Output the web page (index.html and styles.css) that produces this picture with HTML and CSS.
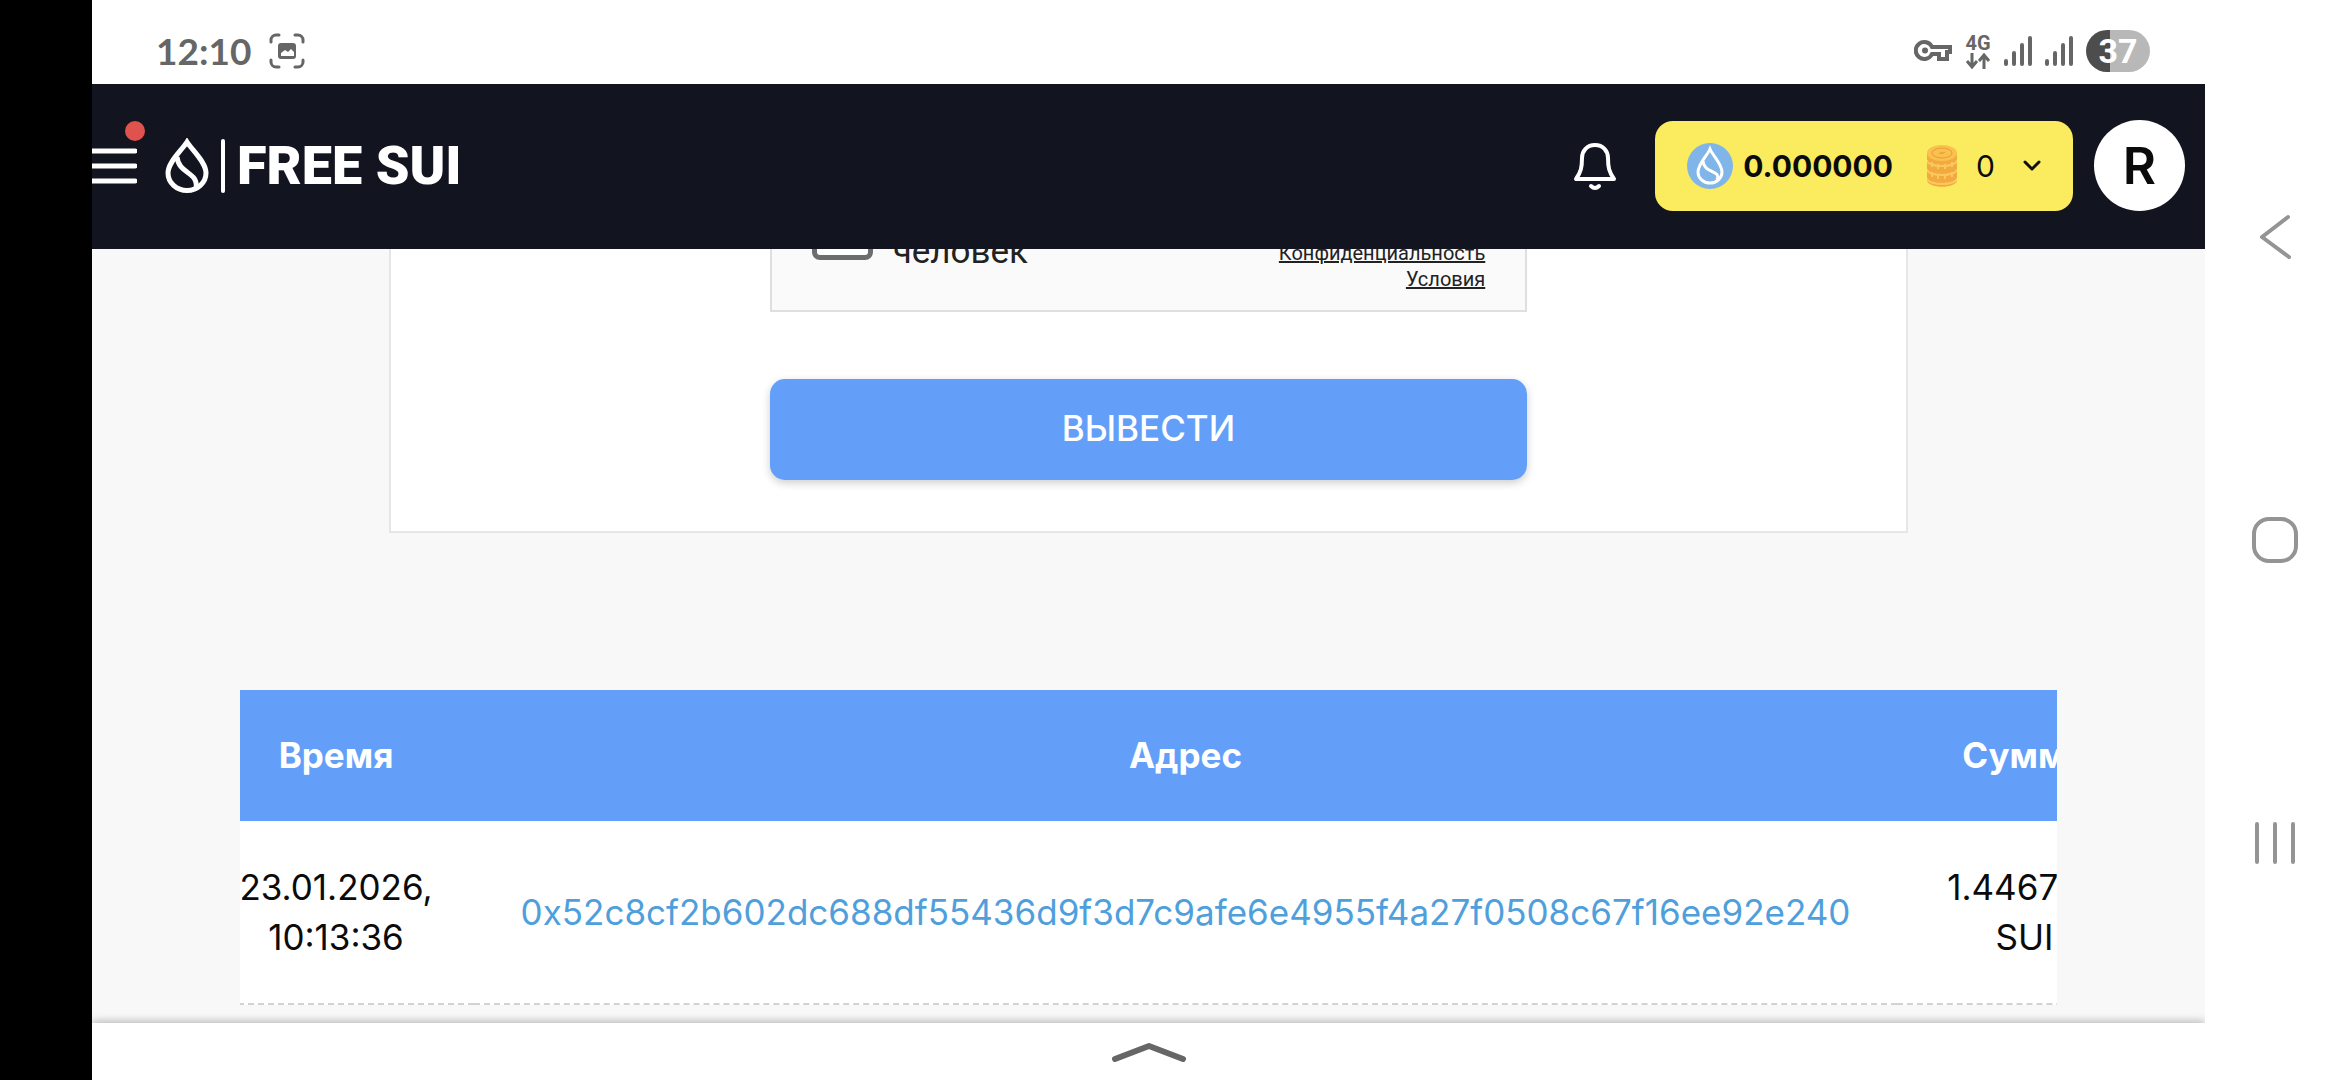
FILE: index.html
```
<!DOCTYPE html>
<html lang="ru">
<head>
  <meta charset="UTF-8">
  <meta name="viewport" content="width=device-width, initial-scale=1.0">
  <title>Free Sui</title>
  <link rel="stylesheet" href="styles.css">
</head>
<body>
  <div class="cutout"></div>

  <div class="screen">
    <div class="status-bar">
      <div class="status-group">
        <span class="clock">12:10</span>
        <svg width="36" height="36" viewBox="0 0 36 36" fill="none" stroke="#666" stroke-width="3" stroke-linecap="round">
          <path d="M2 9V7a5 5 0 0 1 5-5h3M26 2h3a5 5 0 0 1 5 5v2M34 27v2a5 5 0 0 1-5 5h-3M10 34H7a5 5 0 0 1-5-5v-2"/>
          <rect x="9" y="10" width="18" height="16" rx="3" fill="#666" stroke="none"/>
          <path d="M12 23v-3l4-3 3 2 3-3 3 3v4z" fill="#fff" stroke="none"/>
        </svg>
      </div>
      <div class="status-group status-right">
        <svg width="38" height="24" viewBox="0 0 38 24" fill="none" stroke="#666" stroke-width="4">
          <path d="M18 8h18v5h-3v7h-8v-5h-7a8.500 8.500 0 1 1 0-7z"/>
          <circle cx="11" cy="11.500" r="3" fill="#666" stroke="none"/>
        </svg>
        <div class="network">
          <span>4G</span>
          <svg width="26" height="16" viewBox="0 0 26 16" fill="none" stroke="#666" stroke-width="3">
            <path d="M7 0v14M2 8l5 6 5-6M19 16V2M14 8l5-6 5 6"/>
          </svg>
        </div>
        <svg width="28" height="30" viewBox="0 0 28 30" stroke="#666" stroke-width="4" stroke-linecap="round">
          <path d="M2 25v3M10 17v11M18 9v19M26 2v26"/>
        </svg>
        <svg width="28" height="30" viewBox="0 0 28 30" stroke="#666" stroke-width="4" stroke-linecap="round">
          <path d="M2 25v3M10 17v11M18 9v19M26 2v26"/>
        </svg>
        <span class="battery">37</span>
      </div>
    </div>

    <header class="header">
      <button class="menu-btn" aria-label="Меню">
        <svg width="45" height="38" viewBox="0 0 45 38" stroke="#fff" stroke-width="5" stroke-linecap="round">
          <path d="M0 4h43M0 19h43M0 34h43"/>
        </svg>
        <span class="dot"></span>
      </button>
      <a class="logo" href="#">
        <svg width="60" height="56" viewBox="0 0 60 56" fill="none" stroke="#fff" stroke-width="5">
          <path d="M22 4C17 12 3 24 3 35a19 17.500 0 0 0 38 0C41 24 27 12 22 4z"/>
          <path d="M12 19c2 18 22 14 19 32"/>
          <path d="M58 3v50" stroke-width="4" stroke-linecap="round"/>
        </svg>
        <span>FREE SUI</span>
      </a>
      <div class="header-right">
        <button class="bell" aria-label="Уведомления">
          <svg width="44" height="50" viewBox="0 0 44 50" fill="none" stroke="#fff" stroke-width="4" stroke-linejoin="round" stroke-linecap="round">
            <path d="M22 4c-8 0-13 6-13 13 0 9-1 14-6 21h38c-5-7-6-12-6-21 0-7-5-13-13-13z"/>
            <path d="M18 45q4 4 8 0"/>
          </svg>
        </button>
        <button class="balance">
          <svg width="46" height="46" viewBox="0 0 46 46">
            <circle cx="23" cy="23" r="23" fill="#7fb5e9"/>
            <path d="M23 6c-3 7-12 15-12 23a12 11 0 0 0 24 0C35 21 26 13 23 6zM16 18c1 13 19 9 14 19" fill="none" stroke="#fff" stroke-width="3"/>
          </svg>
          <b>0.000000</b>
          <svg class="coins" width="30" height="42" viewBox="0 0 30 42">
            <path d="M0 8v27c0 9 30 9 30 0V8z" fill="#f4a93f"/>
            <path d="M0 15c0 8 30 8 30 0M0 24c0 8 30 8 30 0M0 33c0 8 30 8 30 0" fill="none" stroke="#fbc860" stroke-width="2"/>
            <path d="M5 17v5M11 19v5M18 19v5M25 17v5M5 27v5M11 29v5M18 29v5M25 27v5" stroke="#fbc860" stroke-width="2"/>
            <ellipse cx="15" cy="8" rx="15" ry="8" fill="#fbc14f"/>
            <ellipse cx="15" cy="8" rx="10" ry="5" fill="none" stroke="#e99a35"/>
            <path d="M12 9l3-2v2l3-2" fill="none" stroke="#e99a35"/>
          </svg>
          <span class="coin-count">0</span>
          <svg width="18" height="12" viewBox="0 0 18 12" fill="none" stroke="#111" stroke-width="3" stroke-linecap="round" stroke-linejoin="round">
            <path d="M2 2l7 7 7-7"/>
          </svg>
        </button>
        <button class="avatar">R</button>
      </div>
    </header>

    <main class="content">
      <form class="card">
        <div class="captcha">
          <label class="captcha-label">
            <input type="checkbox">
            <span>человек</span>
          </label>
          <div class="captcha-links">
            <a href="#">Конфиденциальность</a>
            <a href="#">Условия</a>
          </div>
        </div>
        <button class="withdraw" type="button">ВЫВЕСТИ</button>
      </form>

      <div class="table-wrap" id="table-wrap">
        <table class="history">
          <thead>
            <tr>
              <th class="time">Время</th>
              <th>Адрес</th>
              <th class="amount">Сумма</th>
            </tr>
          </thead>
          <tbody>
            <tr>
              <td>23.01.2026, 10:13:36</td>
              <td><a href="#">0x52c8cf2b602dc688df55436d9f3d7c9afe6e4955f4a27f0508c67f16ee92e240</a></td>
              <td>1.446700 SUI</td>
            </tr>
          </tbody>
        </table>
      </div>
    </main>

    <button class="drawer" aria-label="Развернуть">
      <svg width="74" height="20" viewBox="0 0 74 20" fill="none" stroke="#666" stroke-width="6" stroke-linecap="round" stroke-linejoin="round">
        <path d="M3 17L37 4l34 13"/>
      </svg>
    </button>
  </div>

  <nav class="system-nav">
    <button aria-label="Назад">
      <svg width="46" height="46" viewBox="0 0 46 46" fill="none" stroke="#949494" stroke-width="4" stroke-linecap="round" stroke-linejoin="round">
        <path d="M36 3L10 23l27 20"/>
      </svg>
    </button>
    <button aria-label="Домой">
      <svg width="46" height="46" viewBox="0 0 46 46" fill="none" stroke="#949494" stroke-width="4">
        <rect x="2" y="2" width="42" height="42" rx="15"/>
      </svg>
    </button>
    <button aria-label="Недавние">
      <svg width="46" height="46" viewBox="0 0 46 46" stroke="#949494" stroke-width="4" stroke-linecap="round">
        <path d="M5 4v38M23 4v38M41 4v38"/>
      </svg>
    </button>
  </nav>

  <script>
    document.getElementById('table-wrap').scrollLeft = 42;
  </script>
</body>
</html>
```
FILE: styles.css
```
* {
  box-sizing: border-box;
}

body {
  display: flex;
  height: 100vh;
  margin: 0;
  overflow: hidden;
  background: #fff;
  color: #0b0b0b;
  font-family: Inter, Roboto, sans-serif;
  font-size: 35px;
  line-height: 50px;
}

button {
  padding: 0;
  border: none;
  background: none;
  color: inherit;
  font-family: inherit;
  cursor: pointer;
}

svg {
  display: block;
  flex-shrink: 0;
}

.cutout {
  flex: 0 0 92px;
  background: #000;
}

.screen {
  flex: 1;
  min-width: 0;
  display: flex;
  flex-direction: column;
}

/* status bar */
.status-bar {
  height: 84px;
  padding: 18px 55px 0 64px;
  display: flex;
  justify-content: space-between;
  align-items: center;
  color: #666;
}

.status-group {
  display: flex;
  align-items: center;
  gap: 18px;
}

.status-right {
  gap: 13px;
}

.clock {
  font-family: Lato, sans-serif;
  font-size: 37px;
  font-weight: 700;
}

.network {
  display: flex;
  flex-direction: column;
  align-items: center;
  font-family: Roboto, sans-serif;
  font-size: 20px;
  font-weight: 700;
  line-height: 20px;
}

.battery {
  width: 64px;
  height: 42px;
  border-radius: 21px;
  background: linear-gradient(90deg, #4d4d4d 37%, #b8b8b8 37%);
  color: #fff;
  font-family: Roboto, sans-serif;
  font-size: 34px;
  font-weight: 700;
  line-height: 42px;
  text-align: center;
}

/* header */
.header {
  height: 165px;
  padding: 0 20px 2px 0;
  display: flex;
  align-items: center;
  background: #12141f;
  color: #fff;
}

.menu-btn {
  position: relative;
}

.dot {
  position: absolute;
  top: -26px;
  right: -8px;
  width: 20px;
  height: 20px;
  border-radius: 50%;
  background: #e0524e;
}

.logo {
  margin-left: 28px;
  display: flex;
  align-items: center;
  gap: 12px;
  color: #fff;
  font-family: Roboto, sans-serif;
  font-size: 54px;
  font-weight: 900;
  text-decoration: none;
}

.header-right {
  margin-left: auto;
  display: flex;
  align-items: center;
}

.bell {
  margin-right: 38px;
}

.balance {
  height: 90px;
  margin-right: 21px;
  padding: 0 32px;
  display: flex;
  align-items: center;
  border-radius: 18px;
  background: #fbeb5f;
  color: #0b0b0b;
  font-size: 30px;
}

.balance b {
  margin-left: 10px;
}

.coins {
  margin: 0 19px 0 34px;
}

.coin-count {
  margin-right: 28px;
}

.avatar {
  width: 91px;
  height: 91px;
  border-radius: 50%;
  background: #fff;
  color: #0b0b0b;
  font-size: 51px;
  font-weight: 600;
}

/* page content is scrolled down, the upper part goes under the header */
.content {
  flex: 1;
  min-height: 0;
  padding: 0 148px 18px;
  display: flex;
  flex-direction: column;
  justify-content: flex-end;
  overflow: hidden;
  background: #f8f8f8;
}

.card {
  margin: 0 149px 157px;
  padding: 0 0 51px;
  display: flex;
  flex-direction: column;
  align-items: center;
  border: 2px solid #e6e6e6;
  border-top: none;
  background: #fff;
}

.captcha {
  width: 50%;
  padding: 0 40px 18px;
  display: flex;
  justify-content: space-between;
  align-items: flex-end;
  border: 2px solid #dfdfdf;
  border-top: none;
  background: #fafafa;
  color: #222;
  font-family: Roboto, sans-serif;
}

.captcha-label {
  display: flex;
  align-items: flex-end;
  gap: 20px;
  margin-bottom: 22px;
  line-height: 36px;
}

.captcha-label input {
  appearance: none;
  width: 61px;
  height: 61px;
  margin: 0 0 10px;
  border: 5px solid #6d6d6d;
  border-radius: 8px;
  background: #fff;
}

.captcha-links {
  display: flex;
  flex-direction: column;
  align-items: flex-end;
  font-size: 20px;
  line-height: 26px;
}

.captcha-links a {
  color: #222;
}

.withdraw {
  width: 50%;
  height: 101px;
  margin-top: 67px;
  padding-bottom: 4px;
  border-radius: 15px;
  background: #639ff8;
  box-shadow: 0 3px 8px rgba(0, 0, 0, 0.2);
  color: #fff;
  font-size: 35px;
  font-weight: 500;
}

/* history table */
.table-wrap {
  flex-shrink: 0;
  overflow-x: auto;
  scrollbar-width: none;
}

.history {
  width: 1954px;
  table-layout: fixed;
  border-collapse: collapse;
  background: #fff;
  text-align: center;
}

.history th {
  height: 131px;
  padding: 0 40px 2px;
  background: #639ff8;
  color: #fff;
  font-weight: 700;
}

.history .time {
  width: 276px;
}

.history .amount {
  width: 255px;
}

.history td {
  padding: 41px 40px;
  border-bottom: 2px dashed #d2d2d2;
}

.history td a {
  color: #4f9fdc;
  text-decoration: none;
}

/* bottom drawer */
.drawer {
  z-index: 1;
  height: 57px;
  display: flex;
  justify-content: center;
  align-items: center;
  background: #fff;
  box-shadow: 0 -2px 8px rgba(0, 0, 0, 0.25);
  clip-path: inset(-12px 0 0 0);
}

/* android navigation */
.system-nav {
  flex: 0 0 135px;
  padding: 86px 0 86px 4px;
  display: flex;
  flex-direction: column;
  justify-content: space-around;
  align-items: center;
}
```
